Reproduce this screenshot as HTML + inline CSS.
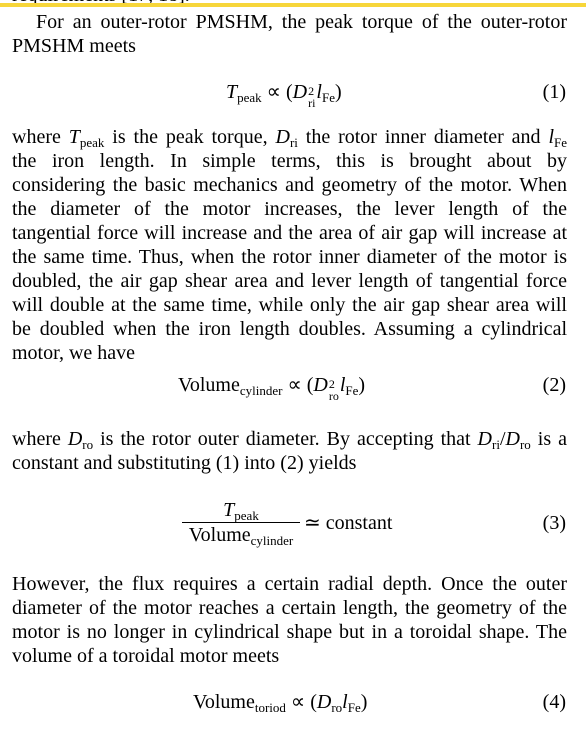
<!DOCTYPE html>
<html><head><meta charset="utf-8"><style>
body{margin:0;width:586px;height:745px;background:#fff;overflow:hidden;position:relative;font-family:"Liberation Serif",serif;color:#000;font-size:20px}
.l{position:absolute;left:12px;width:555px;height:24px;line-height:24px;white-space:nowrap;text-align:justify;text-align-last:justify}
.n{text-align-last:left}
.eq{position:absolute;line-height:24px;white-space:nowrap}
.num{position:absolute;right:20px;line-height:24px}
sub{font-size:13px;vertical-align:-4px;line-height:0}
i{font-style:italic}
.ss{display:inline-block;vertical-align:-9px;font-size:12px;line-height:12px;margin:0 1px}
.ss span{display:block}
</style></head><body>
<div style="position:absolute;left:12px;top:-14px;line-height:18px">requirements [17, 18].</div>
<div style="position:absolute;left:0;top:3px;width:586px;height:4px;background:#f7d63a"></div>
<div class="l" style="top:10px;text-indent:24px">For an outer-rotor PMSHM, the peak torque of the outer-rotor</div>
<div class="l n" style="top:34px">PMSHM meets</div>
<div class="eq" style="left:226px;top:80px"><i>T</i><sub>peak</sub> ∝ (<i>D</i><span class="ss"><span>2</span><span>ri</span></span><i>l</i><sub>Fe</sub>)</div>
<div class="num" style="top:80px">(1)</div>
<div class="l" style="top:125px">where <i>T</i><sub>peak</sub> is the peak torque, <i>D</i><sub>ri</sub> the rotor inner diameter and <i>l</i><sub>Fe</sub></div>
<div class="l" style="top:149px">the iron length. In simple terms, this is brought about by</div>
<div class="l" style="top:173px">considering the basic mechanics and geometry of the motor. When</div>
<div class="l" style="top:197px">the diameter of the motor increases, the lever length of the</div>
<div class="l" style="top:221px">tangential force will increase and the area of air gap will increase at</div>
<div class="l" style="top:245px">the same time. Thus, when the rotor inner diameter of the motor is</div>
<div class="l" style="top:269px">doubled, the air gap shear area and lever length of tangential force</div>
<div class="l" style="top:293px">will double at the same time, while only the air gap shear area will</div>
<div class="l" style="top:317px">be doubled when the iron length doubles. Assuming a cylindrical</div>
<div class="l n" style="top:341px">motor, we have</div>
<div class="eq" style="left:178px;top:373px">Volume<sub>cylinder</sub> ∝ (<i>D</i><span class="ss"><span>2</span><span>ro</span></span><i>l</i><sub>Fe</sub>)</div>
<div class="num" style="top:373px">(2)</div>
<div class="l" style="top:427px">where <i>D</i><sub>ro</sub> is the rotor outer diameter. By accepting that <i>D</i><sub>ri</sub>/<i>D</i><sub>ro</sub> is a</div>
<div class="l n" style="top:451px">constant and substituting (1) into (2) yields</div>
<div class="eq" style="left:182px;top:498px;width:118px;text-align:center"><i>T</i><sub>peak</sub></div>
<div style="position:absolute;left:182px;top:522px;width:118px;height:1px;background:#000"></div>
<div class="eq" style="left:182px;top:523px;width:118px;text-align:center">Volume<sub>cylinder</sub></div>
<div class="eq" style="left:304px;top:511px">≃ constant</div>
<div class="num" style="top:511px">(3)</div>
<div class="l" style="top:572px">However, the flux requires a certain radial depth. Once the outer</div>
<div class="l" style="top:596px">diameter of the motor reaches a certain length, the geometry of the</div>
<div class="l" style="top:620px">motor is no longer in cylindrical shape but in a toroidal shape. The</div>
<div class="l n" style="top:644px">volume of a toroidal motor meets</div>
<div class="eq" style="left:193px;top:690px">Volume<sub>toriod</sub> ∝ (<i>D</i><sub>ro</sub><i>l</i><sub>Fe</sub>)</div>
<div class="num" style="top:690px">(4)</div>
</body></html>
